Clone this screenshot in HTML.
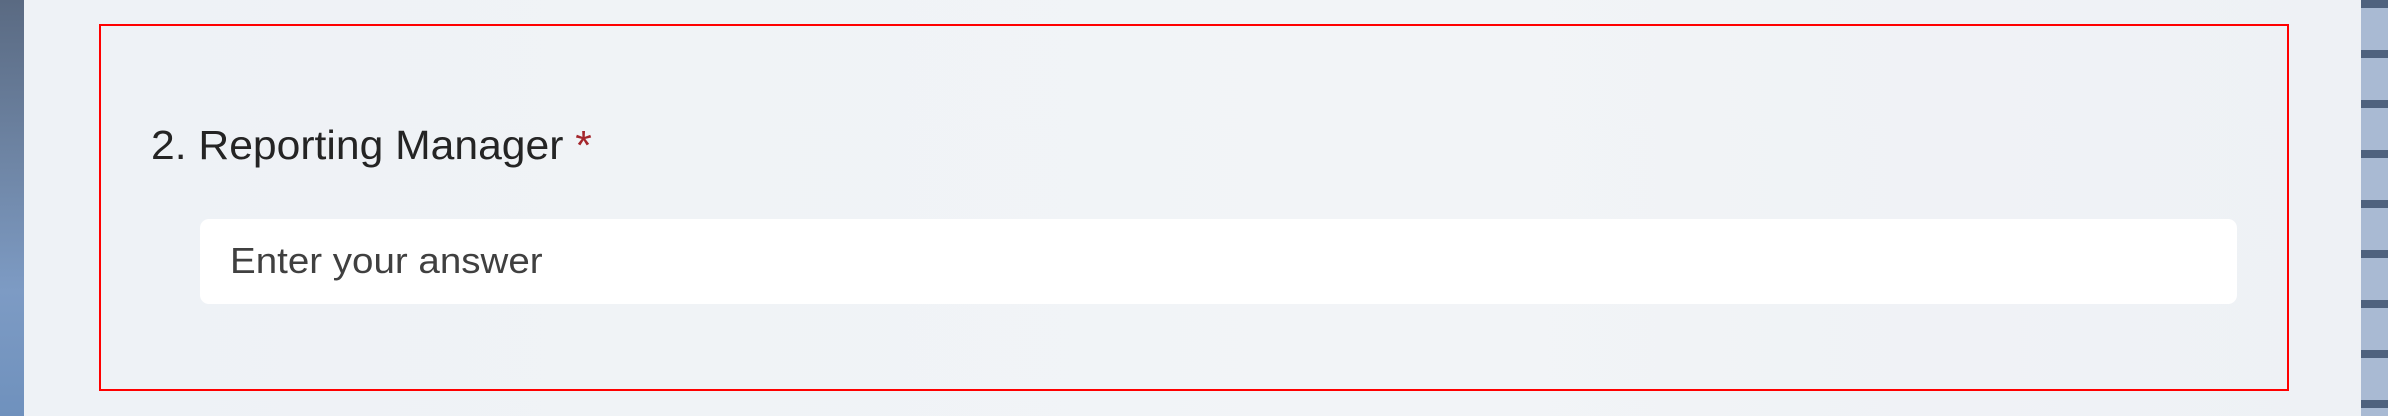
<!DOCTYPE html>
<html><head><style>
html,body{margin:0;padding:0;width:2388px;height:416px;overflow:hidden;background:#eff2f6;font-family:"Liberation Sans",sans-serif}
.ls{position:absolute;left:0;top:0;width:24px;height:416px;background:linear-gradient(#5a6a82,#6f86a6 40%,#7d9bc4 70%,#6f91bd)}
.rs{position:absolute;left:2361px;top:0;width:27px;height:416px;background:repeating-linear-gradient(#4f627e 0,#4f627e 8px,#a9bad3 8px,#a9bad3 50px)}
.panel{position:absolute;left:24px;top:0;width:2337px;height:416px;background:linear-gradient(90deg,#eef2f6,#f2f4f7 60%,#eef1f5)}
.box{position:absolute;left:99px;top:24px;width:2186px;height:363px;border:2px solid #ff0000}
.lbl{position:absolute;left:151px;top:122px;font-size:41px;color:#242424;white-space:nowrap;transform:scaleX(1.04);transform-origin:0 0}
.lbl span{color:#a4262c}
.inp{position:absolute;left:200px;top:219px;width:2037px;height:85px;background:#fff;border-radius:9px}
.ph{position:absolute;left:230px;top:240px;font-size:36px;color:#404040;white-space:nowrap;transform:scaleX(1.07);transform-origin:0 0}
</style></head><body>
<div class="ls"></div>
<div class="panel"></div>
<div class="rs"></div>
<div class="box"></div>
<div class="lbl">2. Reporting Manager <span>*</span></div>
<div class="inp"></div>
<div class="ph">Enter your answer</div>
</body></html>
